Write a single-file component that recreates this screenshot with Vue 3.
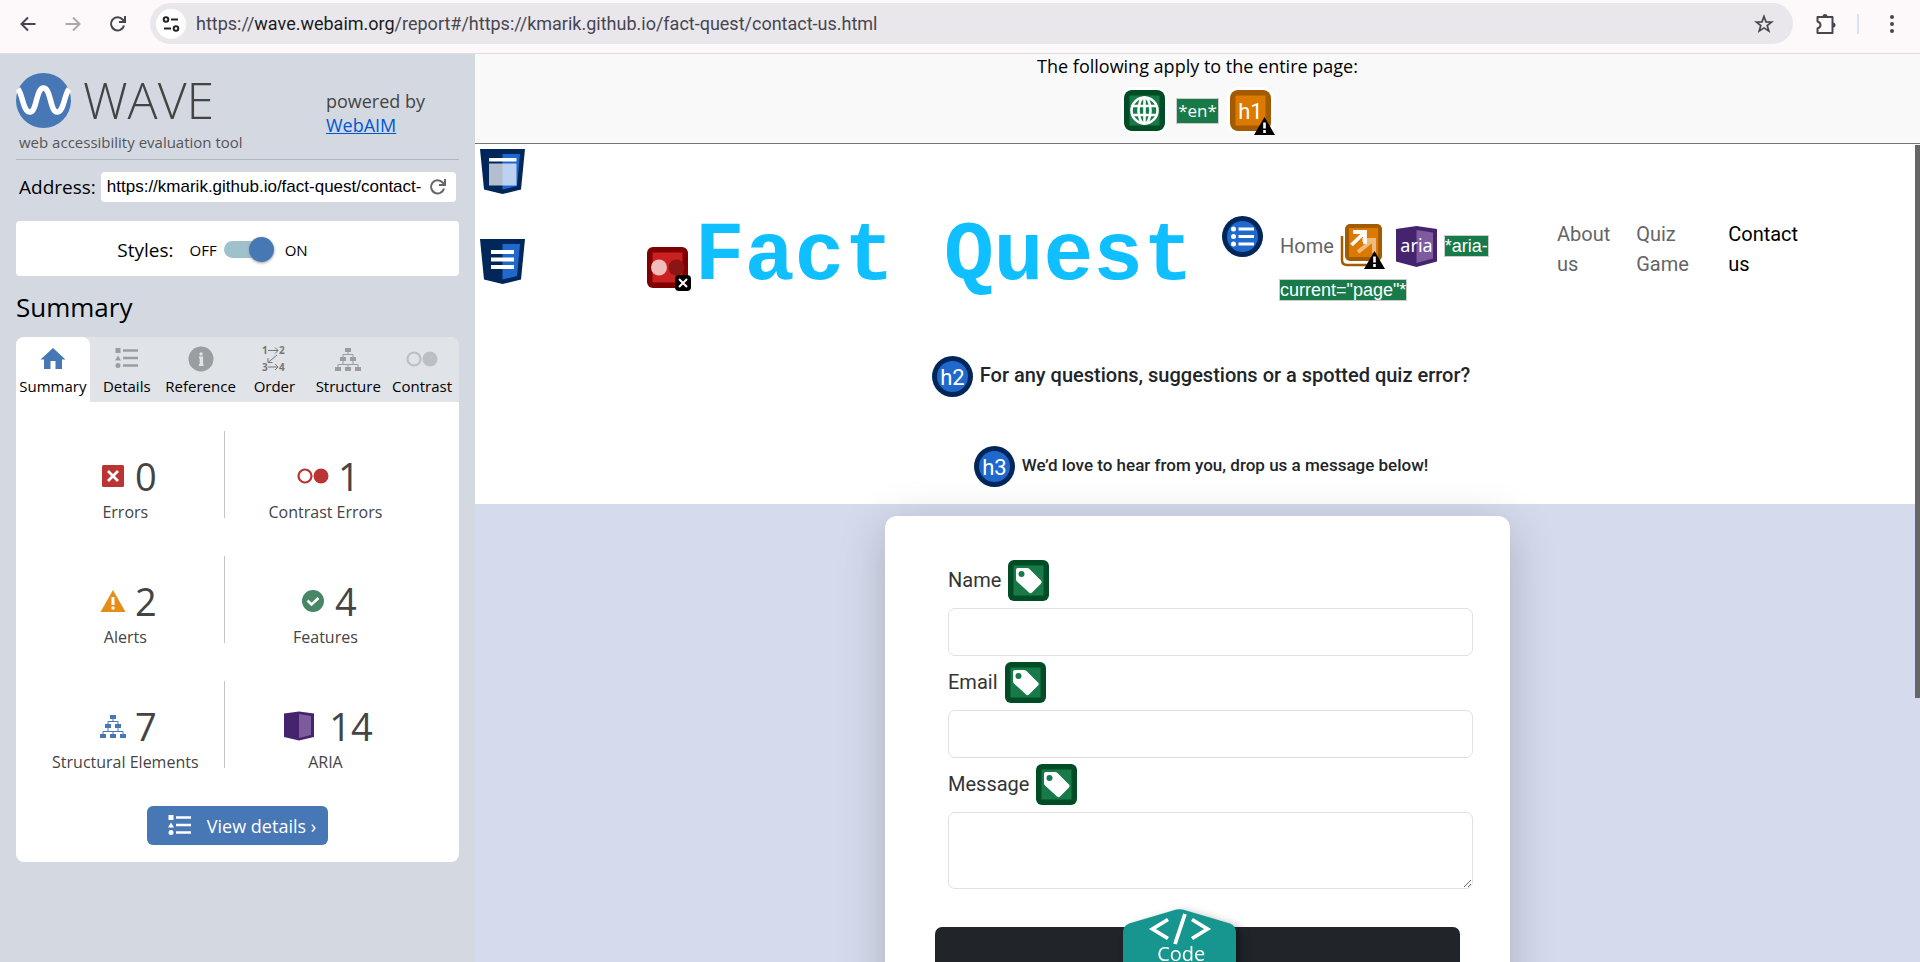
<script setup>
import { ref } from 'vue'

const stylesOn = ref(true)
const address = ref('https://kmarik.github.io/fact-quest/contact-us.html')
const name = ref('')
const email = ref('')
const message = ref('')

const tabs = [
  { label: 'Summary', icon: 'home' },
  { label: 'Details', icon: 'list' },
  { label: 'Reference', icon: 'info' },
  { label: 'Order', icon: 'order' },
  { label: 'Structure', icon: 'tree' },
  { label: 'Contrast', icon: 'contrast' }
]

const counts = [
  { label: 'Errors', value: 0, icon: 'error' },
  { label: 'Contrast Errors', value: 1, icon: 'contrast' },
  { label: 'Alerts', value: 2, icon: 'alert' },
  { label: 'Features', value: 4, icon: 'check' },
  { label: 'Structural Elements', value: 7, icon: 'tree' },
  { label: 'ARIA', value: 14, icon: 'aria' }
]
</script>

<template>
  <div class="browser">
    <svg class="defs" aria-hidden="true">
      <symbol id="i-home" viewBox="0 0 26 26"><path d="M13 2 0.5 13.5H4V23h6.500v-8h5v8H22v-9.500h3.500z" fill="currentColor" /></symbol>
      <symbol id="i-list" viewBox="0 0 26 26">
        <path d="M1.500 2h5v5h-5zM4 9.500l3 5H1z" fill="currentColor" /><circle cx="4" cy="19.500" r="2.500" fill="currentColor" />
        <path d="M9 4.500h15M9 12h15M9 19.500h15" stroke="currentColor" stroke-width="2.500" />
      </symbol>
      <symbol id="i-info" viewBox="0 0 26 26">
        <circle cx="13" cy="13" r="12.500" fill="currentColor" /><circle cx="13" cy="8" r="1.700" fill="#e0e3e7" />
        <path d="M11 11.500h3.200v7.500M11 19h4.500" fill="none" stroke="#e0e3e7" stroke-width="1.800" />
        <path d="M13.200 11v8" fill="none" stroke="#e0e3e7" stroke-width="3" />
      </symbol>
      <symbol id="i-tree" viewBox="0 0 26 26">
        <path d="M10 2h6v4h-6zM5 11h6v4H5zM15 11h6v4h-6zM0 21h6v4H0zM10 21h6v4h-6zM20 21h6v4h-6z" fill="currentColor" />
        <path d="M13 6v2.500M8 11V8.500h10V11M8 15v3.500M18 15v3.500M3 21v-2.500h20V21M13 18.500V21" fill="none" stroke="currentColor" />
      </symbol>
      <symbol id="i-contrast" viewBox="0 0 32 26">
        <circle cx="8" cy="13" r="6.500" fill="none" stroke="currentColor" stroke-width="2.200" /><circle cx="24" cy="13" r="7.500" fill="currentColor" />
      </symbol>
      <symbol id="i-error" viewBox="0 0 26 26">
        <rect x="2" y="2" width="22" height="22" rx="1.500" fill="#ba3434" /><path d="M8 8l10 10M18 8 8 18" stroke="#fff" stroke-width="2.800" />
      </symbol>
      <symbol id="i-alert" viewBox="0 0 26 26">
        <path d="M13 2 25.500 24H.5z" fill="#e48e17" /><path d="M13 9v8M13 18.500v3" stroke="#fff" stroke-width="3" />
      </symbol>
      <symbol id="i-check" viewBox="0 0 26 26">
        <circle cx="13" cy="13" r="11" fill="#478765" /><path d="M7.500 12.500l4 4 7-6.500" fill="none" stroke="#fff" stroke-width="2.600" />
      </symbol>
      <symbol id="i-aria" viewBox="0 0 30 30">
        <path d="M0 2.500 15 .5l15 2v23.500L15 29.500 0 26z" fill="#46236f" /><path d="M15 3l12 2v19l-12 3z" fill="#7d5b9c" />
      </symbol>
      <symbol id="i-mark" viewBox="0 0 21 18">
        <path d="M10.500 0 21 18H0z" /><path d="M10.500 5.500v6M10.500 13v3" stroke="#fff" stroke-width="2.600" />
      </symbol>
      <symbol id="i-tag" viewBox="0 0 41 41">
        <rect width="41" height="41" rx="6" fill="#004c25" /><rect x="5.500" y="5.500" width="30" height="30" fill="#177a48" />
        <path d="M8 10a2 2 0 0 1 2-2h9q1.500 0 2.500 1L33 20.500q1.500 1.500 0 3L24 32.500q-1.500 1.500-3 0L9 21.500Q8 20.500 8 19z" fill="#fff" />
        <circle cx="13.500" cy="14" r="3" fill="#177a48" />
      </symbol>
      <symbol id="i-reload" viewBox="0 0 18 18">
        <path d="M15 10.500A6.600 6.600 0 1 1 13.600 4.500L15.500 6.500M16 1v6h-6" fill="none" stroke="currentColor" stroke-width="2" />
      </symbol>
    </svg>

    <header class="toolbar">
      <button class="tool" aria-label="Back"><svg width="18" height="18" viewBox="0 0 18 18"><path d="M16.500 9H3M9 2.500 2.500 9 9 15.500" fill="none" stroke="#47464f" stroke-width="2" /></svg></button>
      <button class="tool dim" aria-label="Forward"><svg width="18" height="18" viewBox="0 0 18 18"><path d="M1.500 9H15M9 2.500 15.500 9 9 15.500" fill="none" stroke="#aaa7ab" stroke-width="2" /></svg></button>
      <button class="tool reload" aria-label="Reload"><svg width="18" height="18"><use href="#i-reload" /></svg></button>
      <div class="omnibox">
        <button class="site-info" aria-label="Site information">
          <svg width="18" height="18" viewBox="0 0 18 18" fill="none" stroke="#222" stroke-width="2"><circle cx="4" cy="4.500" r="2.300" /><path d="M9 4.500h7M2 13.500h7" /><circle cx="14" cy="13.500" r="2.300" /></svg>
        </button>
        <div class="url" role="textbox" contenteditable="true" spellcheck="false" aria-label="Address and search bar">https://<b>wave.webaim.org</b>/report#/https://kmarik.github.io/fact-quest/contact-us.html</div>
        <button class="tool star" aria-label="Bookmark this page"><svg width="20" height="20" viewBox="0 0 20 20"><path d="M10 2.500l2 5.400 5.600.2-4.400 3.500 1.600 5.500-4.800-3.200-4.800 3.200 1.600-5.500-4.400-3.500 5.600-.2z" fill="none" stroke="#47464f" stroke-width="1.700" /></svg></button>
      </div>
      <button class="tool ext" aria-label="Extensions"><svg width="22" height="22" viewBox="0 0 22 22"><path d="M2.500 4h15v16h-15v-4.500q3-1 3-3.500t-3-3.500z" fill="none" stroke="#47464f" stroke-width="2" stroke-linejoin="round" /><path d="M7.500 3.500a2.500 2.500 0 0 1 5 0zM18 9.500a2.500 2.500 0 0 1 0 5z" fill="#47464f" /></svg></button>
      <span class="bar"></span>
      <button class="tool" aria-label="Menu"><svg width="18" height="18" viewBox="0 0 18 18" fill="#47464f"><circle cx="9" cy="2" r="2" /><circle cx="9" cy="9" r="2" /><circle cx="9" cy="16" r="2" /></svg></button>
    </header>

    <div class="body">
      <aside class="sidebar">
        <div class="brandbar">
          <div class="brand">
            <div class="logo">
              <svg width="55" height="55" viewBox="0 0 55 55"><circle cx="27.500" cy="27.500" r="27.500" fill="#4877b6" /><path d="M2 16C7 22 7 39 14 39S20 15 27.500 15 34 39 41 39 48 22 53 16" fill="none" stroke="#fff" stroke-width="5.500" /></svg>
              <span class="wave">WAVE</span>
            </div>
            <div class="tagline">web accessibility evaluation tool</div>
          </div>
          <div class="powered">powered by<br /><a href="#webaim">WebAIM</a></div>
        </div>
        <form class="address" @submit.prevent>
          <label for="address">Address:</label>
          <div class="address-box">
            <input id="address" v-model="address" type="text" />
            <button aria-label="Reload report"><svg width="18" height="18"><use href="#i-reload" /></svg></button>
          </div>
        </form>
        <div class="styles">
          <span class="styles-title">Styles:</span>
          <label for="styles">OFF</label>
          <input id="styles" v-model="stylesOn" type="checkbox" role="switch" />
          <label for="styles">ON</label>
        </div>
        <h2 class="title">Summary</h2>
        <nav class="tabs">
          <button v-for="(t, i) in tabs" :key="t.label" class="tab" :class="[{ active: i === 0 }, t.icon]">
            <svg v-if="t.icon === 'order'" class="steps" width="26" height="26" viewBox="0 0 26 26">
              <g fill="#777" font-family="Open Sans" font-size="10" font-weight="700">
                <text x="1" y="8">1</text><text x="18" y="8">2</text><text x="1" y="25">3</text><text x="18" y="25">4</text>
              </g>
              <path d="M7 4.500h10M14 1.500l3 3-3 3M16 9l-9 7.500M7 12v4.500h4.500M7 21h10M14 18l3 3-3 3" fill="none" stroke="#777" />
            </svg>
            <svg v-else :width="t.icon === 'contrast' ? 32 : 26" height="26"><use :href="'#i-' + t.icon" /></svg>
            {{ t.label }}
          </button>
        </nav>
        <section class="panel">
          <ul class="counts">
            <li v-for="c in counts" :key="c.label">
              <div class="figure" :class="'f-' + c.icon">
                <svg :width="c.icon === 'contrast' ? 32 : c.icon === 'aria' ? 30 : 26" :height="c.icon === 'aria' ? 30 : 26"><use :href="'#i-' + c.icon" /></svg>
                <span>{{ c.value }}</span>
              </div>
              <div class="count-label">{{ c.label }}</div>
            </li>
          </ul>
          <button class="details"><svg width="26" height="26"><use href="#i-list" /></svg>View details ›</button>
        </section>
      </aside>

      <main class="report">
        <div class="notice">
          <p>The following apply to the entire page:</p>
          <div class="notice-icons">
            <svg class="halo" width="41" height="41" viewBox="0 0 41 41"><rect width="41" height="41" rx="6" fill="#004c25" /><rect x="5.500" y="5.500" width="30" height="30" fill="#177a48" /><g fill="none" stroke="#fff" stroke-width="2.600"><circle cx="20.500" cy="20.500" r="13" /><ellipse cx="20.500" cy="20.500" rx="6" ry="13" /><path d="M20.500 7.500v26M8.500 16h24M8.500 25h24" /></g></svg>
            <span class="code">*en*</span>
            <span class="flag">
              <svg class="halo" width="41" height="41" viewBox="0 0 41 41"><rect width="41" height="41" rx="6" fill="#a45b00" /><rect x="5.500" y="5.500" width="30" height="30" fill="#db7900" /><text x="20.500" y="29" text-anchor="middle" font-family="Roboto" font-size="22" fill="#fff">h1</text></svg>
              <svg class="mark" width="21" height="18"><use href="#i-mark" /></svg>
            </span>
          </div>
        </div>

        <div class="page">
          <div class="masthead">
            <div class="landmarks">
              <svg width="45" height="45" viewBox="0 0 45 45"><path d="M0 0h45l-4 40.500L22.500 45 4 40.500z" fill="#00265a" /><path d="M22.500 5H40l-3 32-14.500 3.500z" fill="#1f69cc" /><path d="M9 14.500h27.500v22H9z" fill="#fff" opacity=".7" /><path d="M9 9h27.500v3.500H9z" fill="#fff" /></svg>
              <svg width="45" height="45" viewBox="0 0 45 45"><path d="M0 0h45l-4 40.500L22.500 45 4 40.500z" fill="#00265a" /><path d="M22.500 5H40l-3 32-14.500 3.500z" fill="#1f69cc" /><path d="M11 13h23M11 20.500h23M11 28h23" stroke="#fff" stroke-width="4" /></svg>
            </div>
            <div class="navbar">
              <span class="flag contrast-flag">
                <svg width="41" height="41" viewBox="0 0 41 41"><rect width="41" height="41" rx="6" fill="#7f0000" /><rect x="5.500" y="5.500" width="30" height="30" fill="#ca2021" /><circle cx="12" cy="20.500" r="8" fill="#f0bcbc" /><circle cx="29.500" cy="20.500" r="8" fill="#8b1414" /></svg>
                <svg class="cross" width="16" height="16" viewBox="0 0 16 16"><rect width="16" height="16" rx="4" /><path d="M4 4l8 8M12 4l-8 8" stroke="#fff" stroke-width="2" /></svg>
              </span>
              <a class="site-name" href="#home">Fact Quest</a>
              <svg class="nav-mark" width="41" height="41" viewBox="0 0 41 41"><circle cx="20.500" cy="20.500" r="20.500" fill="#00265a" /><circle cx="20.500" cy="20.500" r="15.500" fill="#1f69cc" /><g fill="#fff"><circle cx="11.500" cy="13" r="2.500" /><circle cx="11.500" cy="20.500" r="2.500" /><circle cx="11.500" cy="28" r="2.500" /></g><path d="M16.500 13h15.500M16.500 20.500h15.500M16.500 28h15.500" stroke="#fff" stroke-width="3" /></svg>
              <ul class="links">
                <li class="home">
                  <div class="home-row">
                    <a href="#home">Home</a>
                    <span class="flag">
                      <svg width="45" height="45" viewBox="0 0 45 45"><path d="M2 12v24q0 5 5 5h24" fill="none" stroke="#a45b00" stroke-width="2.500" /><rect x="5" y="0" width="37" height="37" rx="5" fill="#a45b00" /><rect x="9" y="4" width="29" height="29" fill="#db7900" /><path d="M18 28 33 16M22 16h12v13" fill="none" stroke="#eebb80" stroke-width="4" /><path d="M11.500 21 24 9M13 8h12v12" fill="none" stroke="#fff" stroke-width="3.800" /></svg>
                      <svg class="mark" width="21" height="18"><use href="#i-mark" /></svg>
                    </span>
                    <svg class="aria" width="41" height="41" viewBox="0 0 41 41"><path d="M0 3 20.500 0 41 3v32.500L20.500 41 0 35.500z" fill="#46236f" /><path d="M20.500 4 37 6.500v26L20.500 37z" fill="#7d5b9c" /><text x="20.500" y="26" text-anchor="middle" font-family="Noto Sans" font-size="18" fill="#fff">aria</text></svg>
                    <span class="code arial">*aria-</span>
                  </div>
                  <div class="home-second"><span class="code arial">current="page"*</span></div>
                </li>
                <li><a href="#about">About us</a></li>
                <li class="quiz"><a href="#quiz">Quiz Game</a></li>
                <li><a class="current" href="#contact">Contact us</a></li>
              </ul>
            </div>
          </div>
          <div class="heading">
            <svg width="41" height="41" viewBox="0 0 41 41"><circle cx="20.500" cy="20.500" r="20.500" fill="#00265a" /><circle cx="20.500" cy="20.500" r="15.500" fill="#1f69cc" /><text x="20.500" y="29" text-anchor="middle" font-family="Roboto" font-size="22" fill="#fff">h2</text></svg>
            <h2>For any questions, suggestions or a spotted quiz error?</h2>
          </div>
          <div class="heading">
            <svg width="41" height="41" viewBox="0 0 41 41"><circle cx="20.500" cy="20.500" r="20.500" fill="#00265a" /><circle cx="20.500" cy="20.500" r="15.500" fill="#1f69cc" /><text x="20.500" y="29" text-anchor="middle" font-family="Roboto" font-size="22" fill="#fff">h3</text></svg>
            <h3>We’d love to hear from you, drop us a message below!</h3>
          </div>
          <div class="contact">
            <form class="card" @submit.prevent>
              <div class="fields">
                <label for="name">Name <svg width="41" height="41"><use href="#i-tag" /></svg></label>
                <input id="name" v-model="name" type="text" />
                <label for="email">Email <svg width="41" height="41"><use href="#i-tag" /></svg></label>
                <input id="email" v-model="email" type="email" />
                <label for="message">Message <svg width="41" height="41"><use href="#i-tag" /></svg></label>
                <textarea id="message" v-model="message"></textarea>
              </div>
              <button class="submit" aria-label="Submit"></button>
            </form>
          </div>
          <div class="scrollbar"></div>
        </div>
        <button class="code-toggle">
          <svg class="hex" width="113" height="80" viewBox="0 0 113 80"><path d="M0 23q0-6 6-8.500L50 1.500q6.500-2.500 13 0l44 13q6 2.500 6 8.500v60H0z" fill="#17958f" /><path d="M45 10.500 29.500 20 45 29.500M69 10.500 84.500 20 69 29.500M62 5 52 35" fill="none" stroke="#fff" stroke-width="3.800" /></svg>
          <span>Code</span>
        </button>
      </main>
    </div>
  </div>
</template>

<style>
body { margin: 0; overflow: hidden; }
</style>

<style scoped>
* { box-sizing: border-box; }
button { border: 0; padding: 0; background: none; font: inherit; color: inherit; }
svg { display: block; flex: none; }
ul { margin: 0; padding: 0; list-style: none; }
.defs { position: absolute; width: 0; height: 0; }
.browser { height: 100vh; display: flex; flex-direction: column; overflow: hidden; font-family: "Open Sans", "Noto Sans", sans-serif; color: #000; }

.toolbar { flex: none; display: flex; align-items: center; height: 54px; padding: 0 18px 5px; background: #fdf8fa; border-bottom: 1px solid #dddce0; color: #47464f; }
.tool { display: flex; align-items: center; justify-content: center; width: 20px; height: 32px; margin-right: 25px; }
.tool.reload { margin-right: 22px; }
.omnibox { flex: 1; display: flex; align-items: center; height: 41px; margin-top: -1px; padding-left: 6px; border-radius: 21px; background: #e9e7ec; }
.site-info { display: flex; align-items: center; justify-content: center; width: 30px; height: 30px; border-radius: 50%; background: #fff; }
.url { flex: 1; margin-left: 10px; font: 18px Roboto, sans-serif; color: #47464f; white-space: nowrap; outline: 0; }
.url b { font-weight: 400; color: #1c1b1f; }
.star { margin-right: 19px; }
.ext { width: 22px; margin: 0 20px 0 22px; }
.bar { width: 2px; height: 20px; margin-right: 23px; background: #dae1ff; }
.toolbar > .tool:last-child { margin-right: 0; }

.body { flex: 1; display: flex; min-height: 0; }
.sidebar { flex: none; width: 475px; padding: 19px 16px 0; background: #d4d9e1; }
.brandbar { display: flex; justify-content: space-between; height: 87px; border-bottom: 1px solid #b3b6ba; }
.logo { display: flex; align-items: center; gap: 12px; height: 55px; }
.wave { font-size: 50px; font-weight: 300; line-height: 55px; color: #444; }
.tagline { padding-left: 3px; font-size: 15px; line-height: 29px; color: #555; }
.powered { padding: 16px 34px 0 0; font-size: 18px; line-height: 24px; color: #444; }
.powered a { color: #0056d2; }
.address { display: flex; align-items: center; gap: 5px; height: 54px; padding: 0 3px; font-size: 19px; }
.address-box { flex: 1; display: flex; align-items: center; height: 30px; min-width: 0; padding: 0 9px 0 6px; border-radius: 4px; background: #fff; color: #666; }
.address-box input { flex: 1; min-width: 0; padding: 0; margin-right: 8px; border: 0; outline: 0; background: none; color: #000; font: 17px "Liberation Sans", sans-serif; }
.styles { display: flex; align-items: center; justify-content: center; height: 55px; margin-top: 7px; padding: 2px 50px 0 0; border-radius: 4px; background: #fff; font-size: 15px; }
.styles-title { margin-right: 16px; font-size: 19px; }
.styles input { appearance: none; position: relative; width: 49px; height: 17px; margin: 0 12px 0 7px; border-radius: 9px; background: #9fc1cb; }
.styles input::after { content: ""; position: absolute; left: 0; top: -4px; width: 25px; height: 25px; border-radius: 50%; background: #4877b6; box-shadow: 0 1px 3px #999; }
.styles input:checked::after { left: 25px; }
.title { margin: 14px 0 12px; font-size: 26px; font-weight: 400; line-height: 35px; }
.tabs { display: grid; grid-template-columns: repeat(6, 1fr); height: 65px; border-radius: 8px 8px 0 0; background: #e0e3e7; font-size: 15px; }
.tab { display: flex; flex-direction: column; align-items: center; padding-top: 9px; gap: 4px; line-height: 20px; border-radius: 8px 8px 0 0; white-space: nowrap; }
.tab svg { color: #9a9ea1; }
.tab .steps { overflow: visible; }
.tab.contrast svg { color: #bcbfc3; }
.tab.active { background: #fff; }
.tab.active svg { color: #4877b6; }
.panel { padding: 29px 0 17px; border-radius: 0 0 8px 8px; background: #fff; }
.counts { display: grid; grid-template-columns: 46% 46%; row-gap: 38px; padding-left: 9px; color: #444; }
.counts li { height: 87px; padding: 22px 0 0 2px; text-align: center; }
.counts li:nth-child(odd) { border-right: 1px solid #c4c4c4; }
.figure { display: flex; align-items: center; justify-content: center; gap: 9px; height: 46px; padding-left: 6px; font-size: 38px; line-height: 46px; }
.f-contrast { color: #ba3434; }
.f-tree { color: #4877b6; }
.f-aria { gap: 15px; }
.figure span { color: #444; }
.count-label { font-size: 16px; line-height: 26px; }
.details { display: flex; align-items: center; gap: 14px; height: 39px; margin: 38px auto 0; padding: 0 12px 0 20px; border-radius: 6px; background: #4877b6; color: #fff; font-size: 18px; }

.report { flex: 1; min-width: 0; position: relative; display: flex; flex-direction: column; background: #fff; }
.notice { height: 90px; border-bottom: 1px solid #747474; background: #f9f9f9; text-align: center; }
.notice p { margin: 0; font-size: 18px; line-height: 24px; }
.notice-icons { display: flex; align-items: center; justify-content: center; gap: 12px; margin-top: 12px; }
.halo { border-radius: 8px; box-shadow: 0 0 0 3px #fff; }
.code { padding: 0 1px; outline: 1px solid #ccc; background: #177a48; color: #fff; font-size: 17px; line-height: 24px; }
.code.arial { padding: 0; font: 18px/20px "Liberation Sans", sans-serif; }
.flag { position: relative; }
.mark { position: absolute; right: -4px; bottom: -4px; }
.cross { position: absolute; right: -3px; bottom: -3px; }
.page { flex: 1; min-height: 0; display: flex; flex-direction: column; position: relative; font-family: Roboto, sans-serif; color: #212529; }
.masthead { display: flex; padding: 5px 0 0 5px; height: 189px; }
.landmarks { display: flex; flex-direction: column; gap: 45px; }
.navbar { display: flex; align-items: flex-start; margin: 67px auto 0; }
.contrast-flag { margin: 31px 7px 0 0; }
.site-name { font: 700 83px/83px "Liberation Mono", monospace; color: #0fbfff; text-decoration: none; white-space: nowrap; }
.nav-mark { margin: 0 17px 0 29px; }
.links { display: flex; gap: 26px; padding-top: 3px; font-size: 20px; line-height: 30px; }
.links li { width: min-content; }
.links a { color: #656565; text-decoration: none; }
.links .quiz { width: 66px; }
.links .quiz a { display: block; width: min-content; }
.links a.current { color: #000; }
.links .home { width: 251px; }
.home-row { display: flex; align-items: center; height: 54px; }
.home-row .flag { margin-left: 6px; }
.home-row .flag .mark { right: 0; bottom: 0; }
.home-row .aria { margin: 0 8px 0 11px; }
.home-second { line-height: 32px; }
.heading { display: flex; align-items: center; justify-content: center; gap: 7px; height: 86px; padding-left: 7px; }
.heading + .heading { height: 85px; padding-top: 10px; }
.heading h2 { margin: 0; padding-bottom: 2px; font-size: 20px; font-weight: 500; }
.heading h3 { margin: 0; padding-bottom: 3px; font-size: 17px; font-weight: 500; }
.contact { flex: 1; min-height: 0; padding-top: 12px; background: #d5dbed; }
.card { width: 625px; height: 560px; margin: 0 auto; padding: 38px 50px; border-radius: 12px; background: #fff; box-shadow: 0 10px 48px rgba(0, 0, 0, .2); }
.fields { display: flex; flex-direction: column; margin: 0 -13px 38px 13px; }
.fields label { display: flex; align-items: center; gap: 7px; height: 54px; padding-bottom: 2px; font-size: 20px; color: #333; }
.fields input { height: 48px; }
.fields input, .fields textarea { padding: 8px 12px; border: 1px solid #dee0e6; border-radius: 7px; background: #fff; font: 20px Roboto, sans-serif; }
.fields textarea { height: 77px; }
.submit { display: block; width: 100%; height: 60px; border-radius: 7px; background: #212529; }
.scrollbar { position: absolute; right: 0; top: 1px; width: 5px; height: 553px; background: #666; }
.code-toggle { position: absolute; left: 45%; bottom: 0; width: 113px; height: 53px; margin-left: -2px; filter: drop-shadow(5px 3px 4px rgba(0, 0, 0, .35)); color: #fff; }
.code-toggle .hex { position: absolute; left: 0; top: 0; }
.code-toggle span { position: relative; display: block; padding: 32px 0 0 3px; font-size: 20px; line-height: 26px; }
</style>
